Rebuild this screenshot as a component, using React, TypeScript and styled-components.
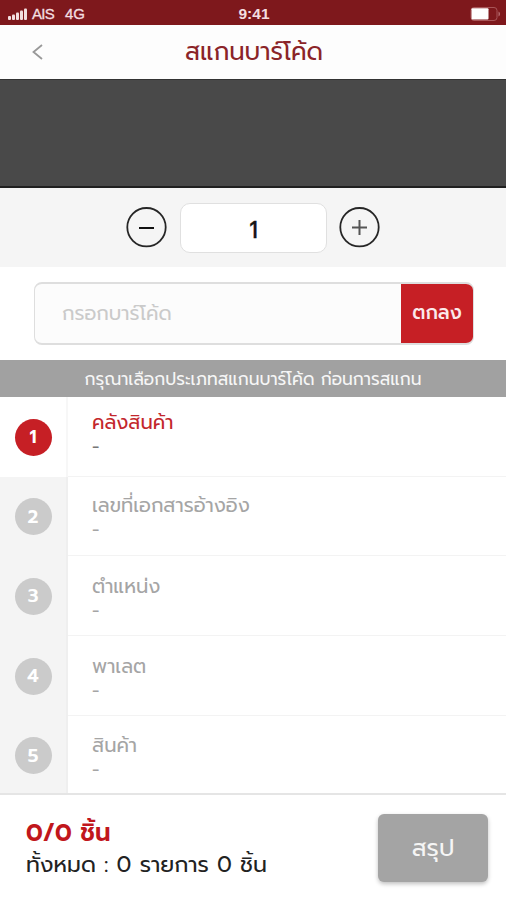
import React from 'react';
import styled, { createGlobalStyle } from 'styled-components';

const GlobalStyle = createGlobalStyle`
  * { box-sizing: border-box; }
  body {
    margin: 0;
    background: #fff;
    font-family: Prompt, "Noto Sans Thai", "Noto Sans", "Open Sans", sans-serif;
  }
  button, input { font-family: inherit; padding: 0; margin: 0; border: 0; }
`;

const Screen = styled.div`
  width: 506px;
  height: 900px;
  display: flex;
  flex-direction: column;
  overflow: hidden;
  background: #fff;
`;

const StatusBar = styled.div`
  flex: 0 0 25px;
  display: grid;
  grid-template-columns: 1fr auto 1fr;
  align-items: center;
  padding: 2px 5px 0 8px;
  background: #7e181c;
  color: #f3dfe0;
  font: 15px/20px "Liberation Sans", sans-serif;
`;

const Carrier = styled.div`
  display: flex;
  align-items: center;
  gap: 4px;
  letter-spacing: -0.7px;
  -webkit-text-stroke: 0.3px #f3dfe0;
`;

const Network = styled.span`
  margin-left: 7px;
  letter-spacing: -0.1px;
`;

const Clock = styled.span`
  margin-right: 1px;
  font-weight: 700;
  font-size: 15.5px;
`;

const BatterySlot = styled.div`
  display: flex;
  justify-content: flex-end;
`;

const Header = styled.header`
  flex: 0 0 54px;
  display: grid;
  grid-template-columns: 74px 1fr 72px;
  align-items: center;
  background: #fdfdfd;
`;

const BackButton = styled.button`
  height: 54px;
  display: flex;
  align-items: center;
  padding-left: 32px;
  background: transparent;
`;

const Text = styled.span<{ $size: number; $color: string; $line?: number; $weight?: number }>`
  display: block;
  white-space: pre;
  font-size: ${p => p.$size}px;
  line-height: ${p => p.$line ?? 24}px;
  font-weight: ${p => p.$weight ?? 400};
  color: ${p => p.$color};
`;

const Title = styled(Text)`
  text-align: center;
`;

const Viewfinder = styled.div`
  flex: 0 0 109px;
  background: #494949;
  border-top: 1px solid #333;
  border-bottom: 2px solid #202020;
`;

const QuantityBar = styled.div`
  flex: 0 0 79px;
  display: flex;
  justify-content: center;
  align-items: center;
  gap: 12px;
  padding-left: 1px;
  background: #f5f5f5;
`;

const RoundButton = styled.button`
  width: 42px;
  height: 42px;
  display: flex;
  background: transparent;
`;

const QuantityBox = styled.div`
  width: 147px;
  height: 50px;
  display: flex;
  align-items: center;
  justify-content: center;
  padding-top: 5px;
  border: 1px solid #e0e0e0;
  border-radius: 10px;
  background: #fff;
`;

const Quantity = styled(Text)`
  -webkit-text-stroke: 0.4px #151515;
`;

const EntryBar = styled.div`
  flex: 0 0 93px;
  padding: 15px 32px 0 34px;
`;

const EntryField = styled.div`
  height: 63px;
  display: flex;
  justify-content: space-between;
  align-items: center;
  padding-left: 27px;
  border: 1px solid #dedede;
  border-width: 2px 1px 2px 1px;
  border-radius: 8px;
  background: #fcfcfc;
  overflow: hidden;
`;

const ConfirmButton = styled.button`
  width: 72px;
  height: 61px;
  display: flex;
  align-items: center;
  justify-content: center;
  padding-bottom: 1px;
  background: #c61f25;
`;

const Notice = styled.div`
  flex: 0 0 37px;
  display: flex;
  align-items: center;
  justify-content: center;
  background: #a1a1a1;
`;

const StepList = styled.div`
  flex: 0 0 398px;
  display: flex;
  flex-direction: column;
`;

const Step = styled.div<{ $height: number }>`
  flex: 0 0 ${p => p.$height}px;
  display: flex;
`;

const StepRail = styled.div<{ $active: boolean }>`
  width: 68px;
  display: flex;
  align-items: center;
  justify-content: center;
  background: ${p => (p.$active ? '#fff' : '#f4f4f4')};
  border-right: 2px solid ${p => (p.$active ? '#f7f7f7' : '#efefef')};
`;

const StepNumber = styled.div<{ $active: boolean }>`
  width: 37px;
  height: 37px;
  display: flex;
  align-items: center;
  justify-content: center;
  border-radius: 50%;
  color: #fff;
  background: ${p => (p.$active ? '#c61f25' : '#cbcbcb')};
  font-size: 18.5px;
  font-weight: 600;
  line-height: 24px;
`;

const StepBody = styled.div<{ $top: number }>`
  flex: 1;
  padding: ${p => p.$top}px 0 0 24px;
  border-bottom: 1px solid #f3f3f3;
`;

const Footer = styled.footer`
  flex: 0 0 107px;
  display: flex;
  justify-content: space-between;
  margin-top: -2px;
  padding: 19px 18px 0 26px;
  border-top: 2px solid #e5e5e5;
  background: #fff;
`;

const Totals = styled.div`
  display: flex;
  flex-direction: column;
  padding-top: 3px;
`;

const SummaryButton = styled.button`
  width: 110px;
  height: 68px;
  display: flex;
  align-items: center;
  justify-content: center;
  border-radius: 6px;
  background: #a4a4a4;
  box-shadow: 0 2px 4px rgba(0, 0, 0, 0.25);
`;

const steps = [
  { label: 'คลังสินค้า', height: 80, top: 14 },
  { label: 'เลขที่เอกสารอ้างอิง', height: 79, top: 17 },
  { label: 'ตำแหน่ง', height: 80, top: 19 },
  { label: 'พาเลต', height: 80, top: 19 },
  { label: 'สินค้า', height: 79, top: 18 },
];

const SignalIcon = () => (
  <svg width="20" height="12" viewBox="0 0 20 12" fill="#f3dfe0">
    <rect x="0" y="8" width="3" height="4" rx="1" />
    <rect x="4" y="6.5" width="3" height="5.5" rx="1" />
    <rect x="8" y="4.5" width="3" height="7.5" rx="1" />
    <rect x="12" y="2.5" width="3" height="9.5" rx="1" />
    <rect x="16" y="0.5" width="3" height="11.5" rx="1" />
  </svg>
);

const BatteryIcon = () => (
  <svg width="31" height="14" viewBox="0 0 31 14" fill="none">
    <rect x="1" y="0.5" width="26" height="13" rx="3" stroke="#a85558" />
    <rect x="1.5" y="1.2" width="17" height="11.2" rx="1" fill="#fff" />
    <path d="M28.5 4.5c2 .8 2 4.2 0 5z" fill="#b56b6e" />
  </svg>
);

const RoundIcon = ({ plus }: { plus?: boolean }) => (
  <svg width="42" height="42" viewBox="0 0 42 42" fill="none">
    <circle cx="20.5" cy="20.2" r="19.2" stroke="#262626" strokeWidth="1.8" />
    <path d={plus ? 'M13 20.5h15M20.5 13v15' : 'M13 21h15'} stroke={plus ? '#555' : '#111'} strokeWidth="2" />
  </svg>
);

export default function App() {
  return (
    <>
      <GlobalStyle />
      <Screen>
        <StatusBar>
          <Carrier>
            <SignalIcon />
            <span>AIS</span>
            <Network>4G</Network>
          </Carrier>
          <Clock>9:41</Clock>
          <BatterySlot><BatteryIcon /></BatterySlot>
        </StatusBar>
        <Header>
          <BackButton aria-label="back">
            <svg width="11" height="16" viewBox="0 0 11 16" fill="none">
              <path d="M10 1L1.5 8L10 15" stroke="#999" strokeWidth="1.8" />
            </svg>
          </BackButton>
          <Title $size={24.4} $color="#8b2428">สแกนบาร์โค้ด</Title>
        </Header>
        <Viewfinder />
        <QuantityBar>
          <RoundButton aria-label="minus"><RoundIcon /></RoundButton>
          <QuantityBox><Quantity $size={23.5} $color="#151515">1</Quantity></QuantityBox>
          <RoundButton aria-label="plus"><RoundIcon plus /></RoundButton>
        </QuantityBar>
        <EntryBar>
          <EntryField>
            <Text $size={19.5} $color="#cacaca">กรอกบาร์โค้ด</Text>
            <ConfirmButton><Text $size={19.2} $color="#fbe9ea" $weight={500}>ตกลง</Text></ConfirmButton>
          </EntryField>
        </EntryBar>
        <Notice>
          <Text $size={17.1} $color="#f6f6f6">กรุณาเลือกประเภทสแกนบาร์โค้ด ก่อนการสแกน</Text>
        </Notice>
        <StepList>
          {steps.map((s, i) => (
            <Step key={s.label} $height={s.height}>
              <StepRail $active={i === 0}><StepNumber $active={i === 0}>{i + 1}</StepNumber></StepRail>
              <StepBody $top={s.top}>
                <Text $size={19.5} $color={i === 0 ? '#c3272c' : '#a5a5a5'}>{s.label}</Text>
                <Text $size={18} $color={i === 0 ? '#777' : '#a5a5a5'}>-</Text>
              </StepBody>
            </Step>
          ))}
        </StepList>
        <Footer>
          <Totals>
            <Text $size={24.4} $line={32} $color="#c1171c" $weight={600}>0/0 ชิ้น</Text>
            <Text $size={22.1} $line={32} $color="#222">ทั้งหมด : 0 รายการ 0 ชิ้น</Text>
          </Totals>
          <SummaryButton><Text $size={24} $color="#f5f5f5">สรุป</Text></SummaryButton>
        </Footer>
      </Screen>
    </>
  );
}
